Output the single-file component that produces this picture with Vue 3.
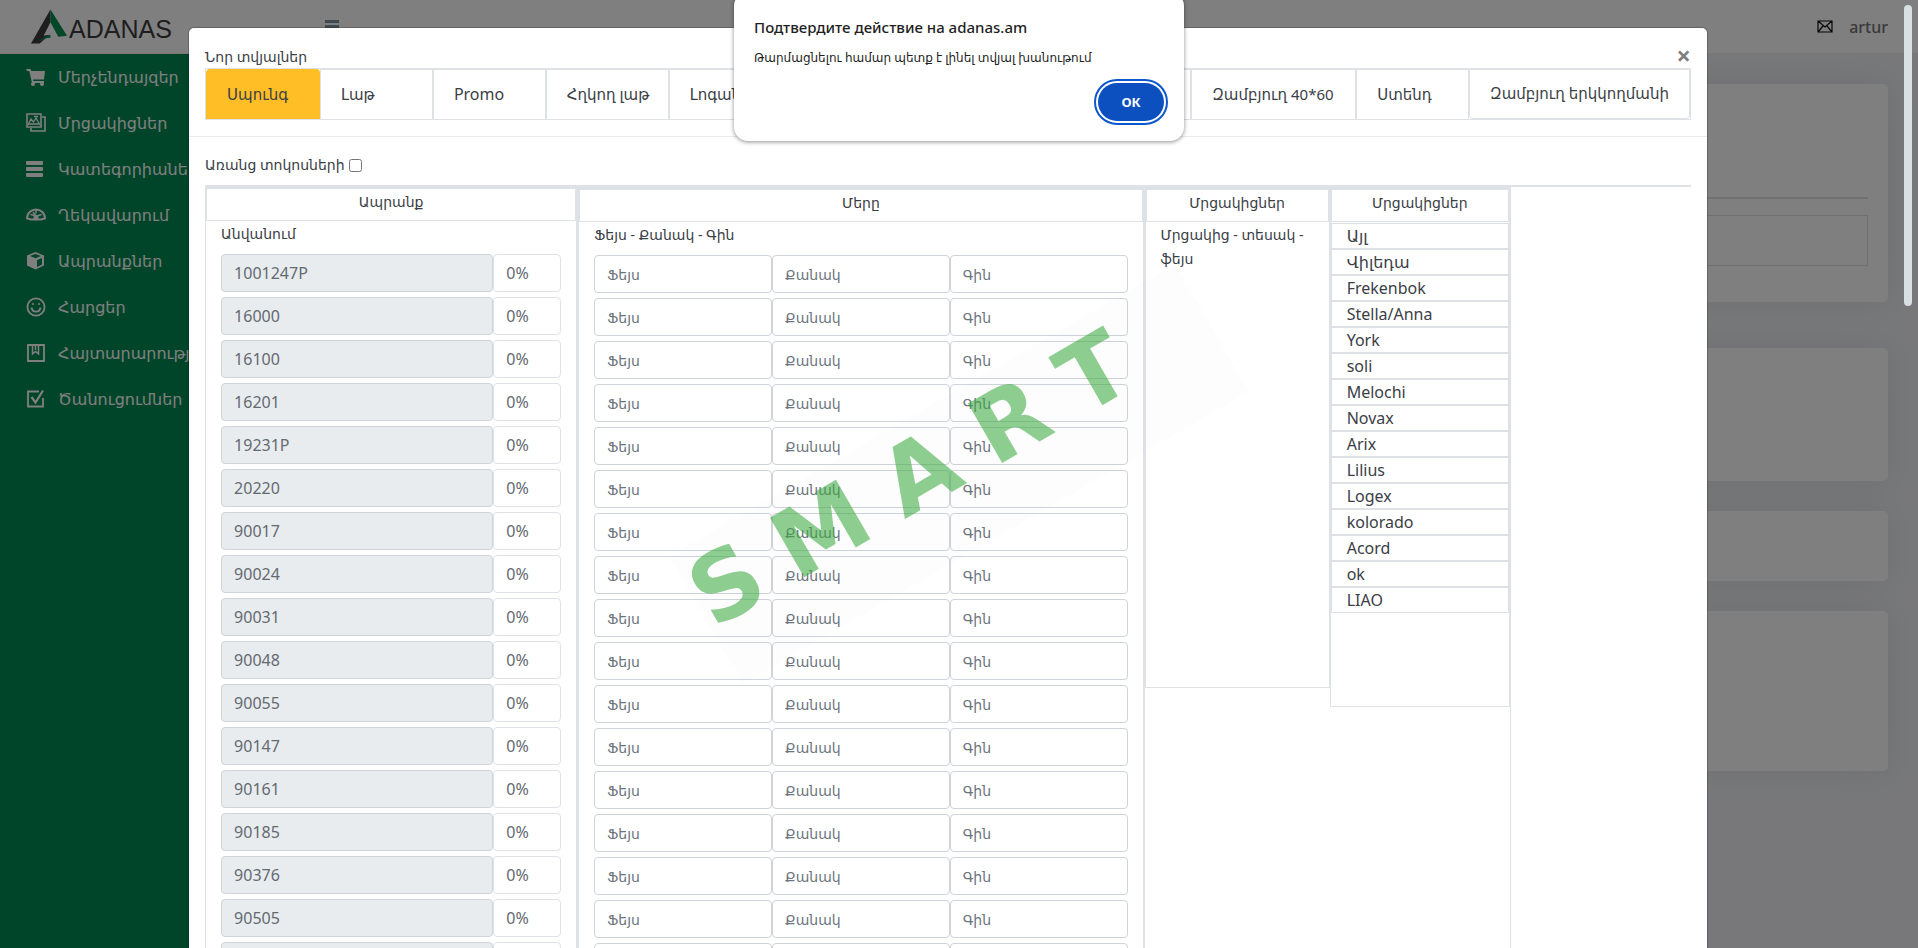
<script setup>
import { ref } from 'vue'

const menu = [
  { icon: 'cart', label: 'Մերչենդայզեր' },
  { icon: 'images', label: 'Մրցակիցներ' },
  { icon: 'bars', label: 'Կատեգորիաներ' },
  { icon: 'gauge', label: 'Ղեկավարում' },
  { icon: 'cube', label: 'Ապրանքներ' },
  { icon: 'smile', label: 'Հարցեր' },
  { icon: 'board', label: 'Հայտարարություններ' },
  { icon: 'check', label: 'Ծանուցումներ' },
]

const tabs = [
  { label: 'Սպունգ' },
  { label: 'Լաթ' },
  { label: 'Promo', latin: true },
  { label: 'Հղկող լաթ' },
  { label: 'Լոգանքի սպունգ' },
  { label: 'Ձեռնոց' },
  { label: 'Զամբյուղ' },
  { label: 'Զամբյուղ 40*60' },
  { label: 'Ստենդ' },
  { label: 'Զամբյուղ երկկողմանի' },
]

const products = ref([
  '1001247P', '16000', '16100', '16201', '19231P', '20220', '90017', '90024', '90031',
  '90048', '90055', '90147', '90161', '90185', '90376', '90505', '90512',
].map((name) => ({ name, percent: '0%', face: '', count: '', price: '' })))

const rivals = [
  'Այլ', 'Վիլեդա', 'Frekenbok', 'Stella/Anna', 'York', 'soli', 'Melochi', 'Novax',
  'Arix', 'Lilius', 'Logex', 'kolorado', 'Acord', 'ok', 'LIAO',
]

const stamp = [
  { char: 'S', x: 36 },
  { char: 'M', x: 145 },
  { char: 'A', x: 259 },
  { char: 'R', x: 363 },
  { char: 'T', x: 460 },
]

const activeTab = ref(0)
const noPercent = ref(false)
</script>

<template>
  <div class="shell">
    <header class="topbar">
      <a class="brand" href="#" aria-label="ADANAS">
        <svg class="mark" viewBox="0 0 38 36" aria-hidden="true">
          <path d="M20 0 L20 13 L13 27 L19 26 L9 35 L0 35 Z" fill="#3c3c3c" />
          <path d="M20 0 L37 27 L28 28 L20 13 Z" fill="#008f53" />
          <path d="M8 33 Q12 28 20 26 L20 29 Q14 29 10 32 Z" fill="#008f53" />
        </svg>
        <span>ADANAS</span>
      </a>
      <button class="burger" type="button" aria-label="Menu"><i></i><i></i><i></i></button>
      <div class="account">
        <svg viewBox="0 0 16 13" aria-hidden="true">
          <path d="M1 1h14v11H1z M1 1l7 6 7-6 M1 12l5-6 M15 12l-5-6" fill="none" stroke="#111" stroke-width="1.2" />
        </svg>
        <a href="#">artur</a>
      </div>
    </header>

    <div class="main">
      <nav class="sidebar">
        <a v-for="item in menu" :key="item.label" href="#">
          <svg viewBox="0 0 20 20" aria-hidden="true">
            <g v-if="item.icon === 'cart'" fill="#fff">
              <path d="M0 2h4.500l.8 2H19l-1 8.500H7l.4 1.500H18v2H6L3.300 4H1z" />
              <circle cx="7" cy="17" r="2" /><circle cx="16" cy="17" r="2" />
            </g>
            <g v-else-if="item.icon === 'images'" fill="none" stroke="#fff" stroke-width="1.600">
              <path d="M1 1h14v13H1z" /><path d="M16 4h3v14H5v-3" />
              <path d="M2 12l3-6 2.500 3L10 5l4 7M3 11h10M8 3.500h4" stroke-width="1.300" />
            </g>
            <g v-else-if="item.icon === 'bars'" fill="#fff">
              <rect y="2" width="17" height="4" rx="1" /><rect y="8" width="17" height="4" rx="1" /><rect y="14" width="17" height="4" rx="1" />
            </g>
            <g v-else-if="item.icon === 'gauge'" fill="none" stroke="#fff" stroke-width="2">
              <path d="M1 13.500C1.500 1.500 18.500 1.500 19 13.500L15 14.500H5z" />
              <path d="M10 4.500v4M4.500 9.500l4 1M15.500 9.500L11 11M7 7l3 4" stroke-width="1.500" />
              <circle cx="10" cy="12.500" r="1.600" fill="#fff" />
            </g>
            <g v-else-if="item.icon === 'cube'">
              <path d="M9.500 1L18 4.500V14.500L9.500 18.500L1 14.500V4.500z" fill="#fff" />
              <path d="M4 5L9.500 3l5.500 2L9.500 7.300zM11 9l5-2v6.500L11 16z" fill="#008a52" />
            </g>
            <g v-else-if="item.icon === 'smile'" fill="none" stroke="#fff" stroke-width="1.800">
              <circle cx="10" cy="10" r="8.600" /><path d="M5.500 10.500c1 5.500 8 5.500 9 0" />
              <circle cx="7" cy="7" r="1" fill="#fff" stroke="none" /><circle cx="13" cy="7" r="1" fill="#fff" stroke="none" />
            </g>
            <g v-else-if="item.icon === 'board'" fill="none" stroke="#fff" stroke-width="1.800">
              <path d="M2 2h16v16H2z" /><path d="M6.500 2v9l3-2.500 3 2.500V2M9.500 2v5" stroke-width="1.500" />
            </g>
            <g v-else fill="none" stroke="#fff" stroke-width="1.800">
              <path d="M13 2.500H2v15h15V9" /><path d="M5.500 8l4 5.500L17 1.500" stroke-width="2.200" />
            </g>
          </svg>
          <span>{{ item.label }}</span>
        </a>
      </nav>
      <div class="content">
        <section class="card first"><div class="rule"></div><div class="frame"></div></section>
        <section class="card second"></section>
        <section class="card third"></section>
        <section class="card fourth"></section>
      </div>
    </div>

    <div class="backdrop">
      <div class="modal" role="dialog" aria-label="Նոր տվյալներ">
        <div class="modal-head">
          <div class="title-row">
            <h5>Նոր տվյալներ</h5>
            <button class="close" type="button" aria-label="Close">×</button>
          </div>
          <div class="tabs" role="tablist">
            <button
              v-for="(tab, i) in tabs"
              :key="tab.label"
              type="button"
              role="tab"
              :aria-selected="i === activeTab"
              :class="{ active: i === activeTab, latin: tab.latin }"
              @click="activeTab = i"
            >{{ tab.label }}</button>
          </div>
        </div>

        <div class="modal-body">
          <label class="toggle">Առանց տոկոսների <input v-model="noPercent" type="checkbox"></label>
          <div class="sheet">
            <div class="grid">
              <section class="col goods">
                <h6>Ապրանք</h6>
                <div class="inner">
                  <p>Անվանում</p>
                  <div v-for="p in products" :key="p.name" class="row pair">
                    <input class="name" :value="p.name" disabled aria-label="Անվանում">
                    <input v-model="p.percent" class="percent" aria-label="Տոկոս">
                  </div>
                </div>
              </section>
              <section class="col ours">
                <h6>Մերը</h6>
                <div class="inner">
                  <p>Ֆեյս - Քանակ - Գին</p>
                  <div v-for="p in products" :key="p.name" class="row triple">
                    <input v-model="p.face" placeholder="Ֆեյս" aria-label="Ֆեյս">
                    <input v-model="p.count" placeholder="Քանակ" aria-label="Քանակ">
                    <input v-model="p.price" placeholder="Գին" aria-label="Գին">
                  </div>
                </div>
              </section>
              <section class="col chosen">
                <h6>Մրցակիցներ</h6>
                <div class="inner"><p>Մրցակից - տեսակ - ֆեյս</p></div>
              </section>
              <div class="last">
                <section class="col rivals">
                  <h6>Մրցակիցներ</h6>
                  <ul><li v-for="r in rivals" :key="r">{{ r }}</li></ul>
                </section>
              </div>
            </div>
          </div>
        </div>
      </div>
      <div class="scroll-thumb"></div>
    </div>

    <svg class="stamp" viewBox="0 0 585 148" aria-hidden="true">
      <rect width="585" height="148" fill="#000" fill-opacity="0.007" />
      <text v-for="s in stamp" :key="s.char" :x="s.x" y="86" text-anchor="middle">{{ s.char }}</text>
    </svg>

    <div class="alert" role="alertdialog" aria-labelledby="alert-title">
      <h2 id="alert-title">Подтвердите действие на adanas.am</h2>
      <p>Թարմացնելու համար պետք է լինել տվյալ խանութում</p>
      <button type="button">ОК</button>
    </div>
  </div>
</template>

<style>
body {
  overflow: hidden;
}
</style>

<style scoped>
* {
  box-sizing: border-box;
}

.shell {
  --line: #dee2e6;
  position: relative;
  display: flex;
  flex-direction: column;
  height: 100vh;
  overflow: hidden;
  font-family: "Noto Sans", "DejaVu Sans", sans-serif;
  font-size: 16px;
  line-height: 24px;
  color: #3a4046;
}

h2, h5, h6, p, ul {
  margin: 0;
  padding: 0;
  font-weight: 400;
}

button, input {
  font: inherit;
  color: inherit;
}

.topbar {
  display: flex;
  align-items: center;
  flex: none;
  height: 54px;
  padding: 0 30px 0 31px;
  background: #fff;
  border-bottom: 1px solid #f0f0f0;
}

.brand {
  display: flex;
  align-items: center;
  gap: 1px;
  width: 294px;
  font-family: "Liberation Sans", Arial, sans-serif;
  font-size: 25px;
  color: #3c3c3c;
  text-decoration: none;
}

.brand span {
  padding-top: 5px;
}

.mark {
  width: 37px;
  height: 36px;
}

.burger {
  display: flex;
  flex-direction: column;
  gap: 2px;
  width: 14px;
  padding: 0;
  border: 0;
  background: none;
}

.burger i {
  height: 3px;
  background: #7e93a0;
}

.account {
  display: flex;
  align-items: center;
  gap: 16px;
  margin-left: auto;
}

.account svg {
  width: 16px;
  height: 13px;
}

.account a {
  font-size: 16px;
  font-weight: 500;
  color: #707478;
  text-decoration: none;
}

.main {
  display: flex;
  flex: 1;
  min-height: 0;
}

.sidebar {
  flex: none;
  width: 280px;
  background: #008a52;
}

.sidebar a {
  display: flex;
  align-items: center;
  gap: 12px;
  height: 46px;
  padding-left: 26px;
  font-size: 16px;
  color: #fff;
  text-decoration: none;
  white-space: nowrap;
}

.sidebar svg {
  flex: none;
  width: 20px;
  height: 20px;
}

.content {
  display: flex;
  flex: 1;
  flex-direction: column;
  gap: 30px;
  padding: 30px;
  background: #f0f1f4;
}

.card {
  flex: none;
  background: #fff;
  border-radius: 5px;
  box-shadow: 0 0 35px rgba(0, 0, 0, 0.08);
}

.first {
  height: 218px;
  margin-bottom: 16px;
  padding: 113px 20px 0;
}

.rule {
  height: 2px;
  background: #e2e2e4;
}

.frame {
  height: 51px;
  margin-top: 16px;
  border: 1px solid #dedee2;
}

.second {
  height: 133px;
}

.third {
  height: 70px;
}

.fourth {
  height: 160px;
}

.backdrop {
  position: absolute;
  inset: 0;
  overflow: hidden;
  padding: 28px 22px 0 0;
  background: rgba(0, 0, 0, 0.5);
}

.scroll-thumb {
  position: absolute;
  top: 5px;
  right: 6px;
  width: 8px;
  height: 301px;
  border-radius: 4px;
  background: #d8e0e4;
}

.modal {
  width: calc(80% + 1px);
  min-height: 100vh;
  margin: 0 auto;
  border-radius: 5px;
  background: #fff;
  box-shadow: 0 0 0 1px rgba(0, 0, 0, 0.2);
}

.modal-head {
  padding: 15px 16px 16px;
  border-bottom: 1px solid #e9ecef;
}

.title-row {
  display: flex;
  align-items: center;
  justify-content: space-between;
  height: 25px;
}

.title-row h5 {
  padding-top: 2px;
}

.title-row h5,
.toggle,
.col p,
.col h6 {
  font-size: 14px;
}

.close {
  padding: 0;
  border: 0;
  background: none;
  font-size: 25px;
  font-weight: 700;
  line-height: 25px;
  color: #7f7f7f;
}

.tabs {
  display: grid;
  grid-template-columns: 114fr 113fr 113fr 123fr 210fr 140fr 173fr 165fr 113fr 221fr;
  border: 1px solid var(--line);
}

.tabs button {
  height: 50px;
  padding: 0 20px 2px;
  overflow: hidden;
  border: 1px solid var(--line);
  border-bottom-width: 0;
  background: #fff;
  font-size: 15px;
  text-align: left;
  white-space: nowrap;
}

.tabs button.latin {
  font-size: 16px;
}

.tabs button:last-child {
  border-bottom-width: 1px;
  border-radius: 0 0 4px 4px;
}

.tabs button.active {
  border-color: #ffbe26;
  border-radius: 4px 4px 0 0;
  background: #ffbe26;
}

.modal-body {
  padding: 16px;
}

.toggle {
  display: flex;
  align-items: center;
  gap: 4px;
  height: 24px;
}

.toggle input {
  width: 13px;
  height: 13px;
  margin: 0;
}

.sheet {
  margin-top: 8px;
  border-top: 2px solid var(--line);
}

.grid {
  display: grid;
  grid-template-columns:
    minmax(0, 373fr) minmax(0, 566fr) minmax(0, 185fr) minmax(0, 181fr) minmax(0, 180fr);
}

.col {
  border: 1px solid var(--line);
}

.col h6 {
  height: 34px;
  padding-top: 1px;
  border: 1px solid var(--line);
  text-align: center;
}

.ours h6,
.chosen h6,
.rivals h6 {
  border-top-width: 2px;
}

.goods h6 {
  height: 33px;
}

.ours,
.goods {
  border-right-width: 2px;
}

.inner {
  padding: 1px 15px 0;
}

.row {
  display: grid;
  height: 38px;
  margin-bottom: 5px;
}

.pair {
  grid-template-columns: minmax(0, 4fr) minmax(0, 1fr);
}

.triple {
  grid-template-columns: repeat(3, minmax(0, 1fr));
}

.inner p + .row {
  margin-top: 8px;
}

.row input {
  height: 38px;
  padding: 0 12px;
  border: 1px solid #ced4da;
  border-radius: 4px;
  background: #fff;
  font-size: 16px;
  color: #636a70;
}

.row .name {
  background: #e9ecef;
}

.row .percent {
  border-color: #dee2e6;
}

.row input::placeholder {
  font-size: 14px;
  color: #6c757d;
  opacity: 1;
}

.chosen {
  height: 501px;
}

.last {
  border-right: 1px solid var(--line);
}

.rivals {
  height: 520px;
}

.rivals ul {
  padding-top: 1px;
  list-style: none;
}

.rivals li {
  height: 26px;
  padding-left: 15px;
  border: 1px solid var(--line);
}

.stamp {
  position: absolute;
  top: 50%;
  left: 50%;
  width: 585px;
  height: 148px;
  transform: translate(-50%, -50%) rotate(-30deg);
  pointer-events: none;
}

.stamp text {
  font-family: "DejaVu Sans", sans-serif;
  font-size: 94px;
  font-weight: 700;
  fill: rgba(60, 170, 66, 0.58);
}

.alert {
  position: absolute;
  top: -8px;
  left: 50%;
  display: flex;
  flex-direction: column;
  width: 450px;
  height: 149px;
  padding: 24px 20px 20px;
  border-radius: 14px;
  background: #fff;
  box-shadow: 0 1px 4px rgba(0, 0, 0, 0.45);
  color: #1f1f1f;
  transform: translateX(-50%);
}

.alert h2 {
  font-size: 15px;
  font-weight: 500;
  line-height: 22px;
}

.alert p {
  margin-top: 10px;
  font-size: 12px;
  line-height: 20px;
  white-space: nowrap;
}

.alert button {
  align-self: flex-end;
  width: 66px;
  height: 38px;
  margin: auto 0 0;
  border: 0;
  border-radius: 19px;
  background: #0b50be;
  outline: 2px solid #0b57d0;
  outline-offset: 2px;
  color: #fff;
  font-size: 13px;
  font-weight: 700;
}
</style>
